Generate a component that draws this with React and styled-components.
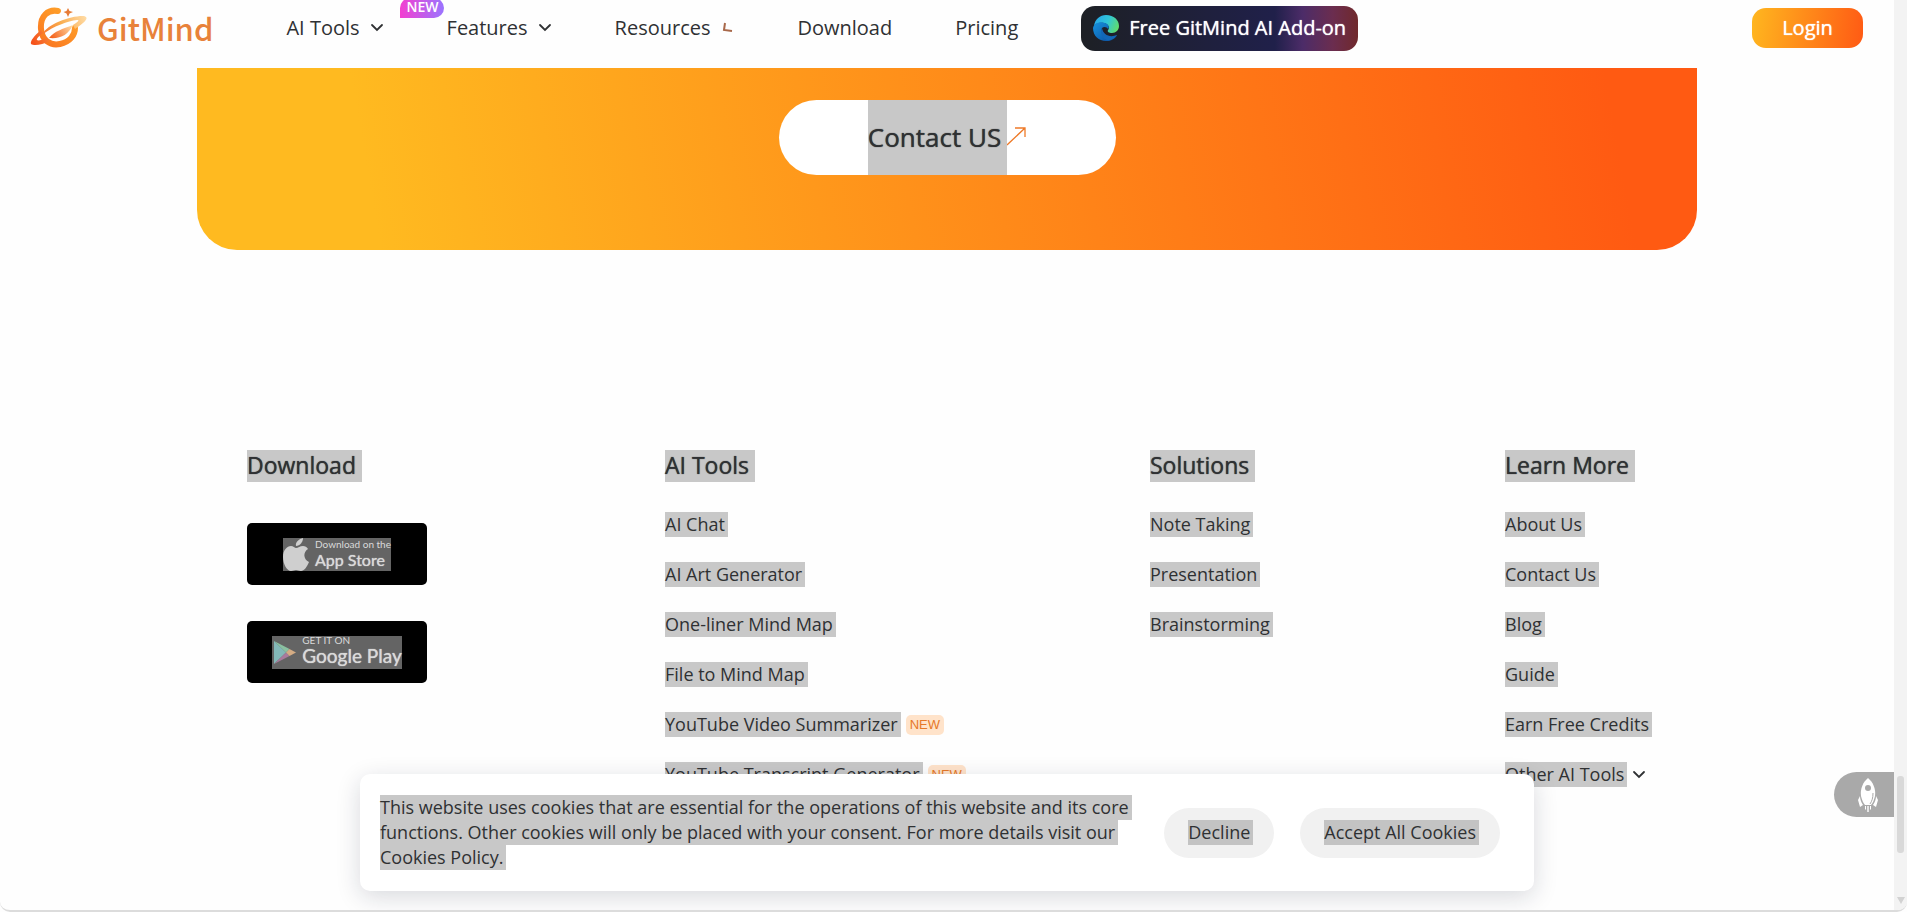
import React from 'react';
import styled, { createGlobalStyle } from 'styled-components';

const GlobalStyle = createGlobalStyle`
  * {
    box-sizing: border-box;
  }
  html {
    height: 100%;
    overflow: hidden;
  }
  body {
    margin: 0;
    height: 100%;
    overflow: hidden;
    background: #fefefe;
    color: #2f3133;
    font-family: 'Open Sans', 'Noto Sans', sans-serif;
  }
  #root {
    height: 100%;
  }
  a {
    color: inherit;
    text-decoration: none;
  }
  button {
    font-family: inherit;
    color: inherit;
    border: 0;
    padding: 0;
    cursor: pointer;
  }
`;

const Page = styled.div`
  display: flex;
  height: 100%;
  overflow: hidden;
  position: relative;
  border-bottom: 2px solid #dcdcdc;
  border-radius: 0 0 10px 10px;
`;

const Content = styled.div`
  flex: 1;
  min-width: 0;
  position: relative;
`;

const Header = styled.header`
  display: flex;
  align-items: center;
  height: 68px;
  padding: 0 31px 12px 30px;
`;

const Brand = styled.a`
  display: flex;
  align-items: center;
  gap: 9px;
  margin-right: 73px;
  color: #e8823a;
  font-family: 'Noto Sans CJK SC', 'Noto Sans', sans-serif;
  font-size: 31px;
  font-weight: 500;
  line-height: 38px;
`;

const Nav = styled.nav`
  display: flex;
  align-items: center;
  gap: 63px;
  flex: 1;
`;

const NavItem = styled.a`
  position: relative;
  display: flex;
  align-items: center;
  gap: 10px;
  font-size: 20px;
  line-height: 28px;
`;

const HotTag = styled.span`
  position: absolute;
  left: 114px;
  top: -16px;
  padding: 0 6px;
  height: 20px;
  border-radius: 10px 10px 10px 0;
  background: linear-gradient(90deg, #f33fd0, #9a74ff);
  color: #fff;
  font-size: 14px;
  font-weight: 600;
  line-height: 18px;
`;

const AddOn = styled.a`
  display: flex;
  align-items: center;
  gap: 10px;
  height: 45px;
  padding: 0 12px;
  border-radius: 14px;
  background: linear-gradient(90deg, #1d2025 0%, #20204a 70%, #4c2c68 80%, #6b2d4f 91%, #70292c 100%);
  color: #fff;
  font-size: 20px;
  line-height: 28px;
  text-shadow: 0 0 1px currentColor;
`;

const Login = styled.button`
  width: 111px;
  height: 40px;
  border-radius: 14px;
  background: linear-gradient(98deg, #ffb71f, #ff5a14);
  color: #fff;
  font-size: 20px;
  line-height: 28px;
  text-shadow: 0 0 1px currentColor;
`;

const Banner = styled.section`
  display: flex;
  justify-content: center;
  width: 1500px;
  max-width: 94%;
  height: 182px;
  margin: 0 auto;
  padding-top: 32px;
  border-radius: 0 0 40px 40px;
  background: linear-gradient(80deg, #ffba20 12%, #ff5a12 94%);
`;

const ContactLink = styled.a`
  display: flex;
  align-items: center;
  justify-content: center;
  width: 337px;
  height: 75px;
  overflow: hidden;
  border-radius: 38px;
  background: #fff;
  font-size: 26px;
  line-height: 75px;
  text-shadow: 0 0 1px currentColor;
`;

const Marked = styled.span`
  padding-right: ${(props) => (props.$wide ? '6px' : '3px')};
  padding-bottom: 1px;
  background: #c8c8c8;
  box-decoration-break: clone;
  -webkit-box-decoration-break: clone;
`;

const Footer = styled.footer`
  display: flex;
  width: 1500px;
  max-width: 94%;
  margin: 200px auto 0;
  padding-left: 50px;
`;

const Column = styled.div`
  flex: 0 0 ${(props) => props.$basis};
`;

const ColumnTitle = styled.h3`
  display: flex;
  margin: 0 0 30px;
  font-size: 23px;
  font-weight: 400;
  line-height: 31px;
  text-shadow: 0 0 1px currentColor;
`;

const LinkList = styled.ul`
  display: flex;
  flex-direction: column;
  gap: 25px;
  margin: 0;
  padding: 0;
  list-style: none;
`;

const LinkRow = styled.li`
  display: flex;
  align-items: center;
  gap: 5px;
  font-size: 18px;
  line-height: 25px;
`;

const NewTag = styled.span`
  padding: 0 4px;
  border-radius: 5px;
  background: #ffe3ca;
  color: #e67828;
  font-family: 'Liberation Sans', Arial, sans-serif;
  font-size: 13px;
  line-height: 20px;
`;

const StoreButtons = styled.div`
  display: flex;
  flex-direction: column;
  gap: 36px;
  margin-top: 41px;
`;

const StoreLink = styled.a`
  display: flex;
  align-items: center;
  justify-content: center;
  width: 180px;
  height: 62px;
  border-radius: 5px;
  background: #000;
`;

const StoreArt = styled.span`
  display: flex;
  align-items: center;
  gap: 6px;
  height: 33px;
  padding-left: ${(props) => props.$inset || 0};
  background: #646464;
  color: #dadada;
  font-family: Lato, sans-serif;
`;

const StoreText = styled.span`
  display: flex;
  flex-direction: column;
  padding-bottom: ${(props) => props.$lift || 0};
`;

const StoreSmall = styled.small`
  font-size: 10px;
  line-height: 12px;
  white-space: nowrap;
`;

const StoreName = styled.span`
  font-size: ${(props) => props.$size};
  line-height: 20px;
  white-space: nowrap;
  text-shadow: 0 0 1px currentColor;
`;

const CookieBar = styled.div`
  position: absolute;
  left: 360px;
  bottom: 19px;
  width: 1174px;
  max-width: 90%;
  display: flex;
  align-items: center;
  padding: 21px 34px 21px 20px;
  border-radius: 10px;
  background: #fff;
  box-shadow: 0 6px 24px rgba(20, 25, 50, 0.16);
`;

const CookieText = styled.p`
  flex: 1;
  margin: 0;
  padding-right: 20px;
  font-size: 18px;
  line-height: 25px;
`;

const CookieButtons = styled.div`
  display: flex;
  gap: 26px;
`;

const CookieButton = styled.button`
  height: 50px;
  padding: 0 21px 0 24px;
  border-radius: 25px;
  background: #f1f1f1;
  font-size: 18px;
  line-height: 25px;
  white-space: nowrap;
`;

const ButtonMark = styled.span`
  display: inline-block;
  padding-right: 3px;
  background: #c3c3c3;
`;

const TopButton = styled.button`
  position: absolute;
  right: 0;
  bottom: 93px;
  display: flex;
  align-items: center;
  justify-content: center;
  width: 60px;
  height: 45px;
  padding-left: 8px;
  border-radius: 23px 0 0 23px;
  background: #a9a9a9;
`;

const ScrollTrack = styled.div`
  display: flex;
  flex-direction: column;
  align-items: center;
  justify-content: flex-end;
  gap: 44px;
  width: 13px;
  padding-bottom: 6px;
  background: #f3f3f3;
`;

const ScrollThumb = styled.div`
  width: 7px;
  height: 77px;
  border-radius: 3px;
  background: #d9d9d9;
`;

const ScrollArrow = styled.div`
  border: 4px solid transparent;
  border-top: 7px solid #d2d2d2;
  border-bottom: 0;
`;

const Logo = () => (
  <svg width="58" height="42" viewBox="0 0 58 42" fill="none">
    <defs>
      <linearGradient id="ring" x1="40" y1="0" x2="10" y2="38" gradientUnits="userSpaceOnUse">
        <stop stopColor="#ffa62a" />
        <stop offset="1" stopColor="#fa7420" />
      </linearGradient>
      <linearGradient id="orbit" x1="57" y1="10" x2="3" y2="36" gradientUnits="userSpaceOnUse">
        <stop stopColor="#ffdda8" />
        <stop offset="0.45" stopColor="#f9ab4c" />
        <stop offset="1" stopColor="#f5511b" />
      </linearGradient>
      <linearGradient id="swoosh" x1="42" y1="19" x2="22" y2="31" gradientUnits="userSpaceOnUse">
        <stop stopColor="#ffd9a0" />
        <stop offset="1" stopColor="#f4641f" />
      </linearGradient>
    </defs>
    <path d="M28 4C18 2 10 9 11 22C12 33 20 39 30 37C40 35 45 28 45 21" stroke="url(#ring)" strokeWidth="6" strokeLinecap="round" />
    <path d="M11 23C4 29 0 34 1 37C4 39 12 38 20 34L17 31C12 33 8 34 7 33C6 32 9 29 13 26Z" fill="url(#orbit)" />
    <path d="M13 27C16 17 43 8 54 9C61 11 52 17 45 22L43 18C48 15 50 13 47 13C38 14 24 19 13 27Z" fill="url(#orbit)" />
    <path d="M19 31C25 24 32 22 43 18C38 28 31 32 19 31Z" fill="url(#swoosh)" />
    <path d="M38 1L39.500 4L43 5L39.500 6.500L38 10L36.500 6.500L33.500 5L36.500 4Z" fill="#e67b35" />
  </svg>
);

const Chevron = () => (
  <svg width="14" height="10" viewBox="0 0 14 10" fill="none" stroke="#2f3133" strokeWidth="1.800">
    <path d="M2 2L7 7L12 2" strokeLinecap="round" />
  </svg>
);

const TurningChevron = () => (
  <svg width="14" height="12" viewBox="0 0 14 12" fill="none" stroke="#a8684a" strokeWidth="2">
    <path d="M5 1L4 8L12 9" />
  </svg>
);

const EdgeIcon = () => (
  <svg width="26" height="26" viewBox="0 0 26 26">
    <defs>
      <linearGradient id="edgeTop" x1="2" y1="4" x2="25" y2="14" gradientUnits="userSpaceOnUse">
        <stop stopColor="#28a8e8" />
        <stop offset="0.5" stopColor="#30c6d8" />
        <stop offset="1" stopColor="#62dc68" />
      </linearGradient>
      <linearGradient id="edgeSide" x1="0" y1="8" x2="16" y2="26" gradientUnits="userSpaceOnUse">
        <stop stopColor="#1691dc" />
        <stop offset="1" stopColor="#0c56a8" />
      </linearGradient>
    </defs>
    <path d="M1 11C2 4 7 0 13 0C21 0 26 5 26 11C26 15 23 18 19 18C16 18 14 17 15 15C17 13 16 9 11 8C6 7 2 9 1 11Z" fill="url(#edgeTop)" />
    <path d="M0 13C1 8 7 6 12 8C15 9 17 12 15 14C14 12 11 11 9 13C7 18 11 23 18 23C20 23 22 22 24 20C22 24 18 26 13 26C6 26 0 21 0 13Z" fill="url(#edgeSide)" />
    <path d="M9 13C6 18 10 25 16 25.600C20 24 23 22 24 20C17 23 10 20 9 13Z" fill="#1267b8" />
  </svg>
);

const ArrowUpRight = () => (
  <svg width="19" height="22" viewBox="0 0 19 22" fill="none" stroke="#ee7a28" strokeWidth="1.300">
    <path d="M0 18L18 1M8 1H18V10" />
  </svg>
);

const Apple = () => (
  <svg width="26" height="33" viewBox="0 0 26 33" fill="#cfcfcf">
    <path d="M20 0C20 4 17 8 13 8C12 4 16 1 20 0Z" />
    <path d="M13 10C15 10 17 8 20 8C22 8 24 9 25 11C20 14 20 21 26 24C24 29 21 33 18 33C16 33 15 32 13 32C11 32 10 33 8 33C4 33 0 26 0 19C0 12 4 8 8 8C10 8 12 10 13 10Z" />
  </svg>
);

const PlayLogo = () => (
  <svg width="22" height="23" viewBox="0 0 22 23">
    <path d="M0 0V23L12 11.500Z" fill="#83b8b8" />
    <path d="M0 0L12 11.500L15.500 8Z" fill="#8ac0a0" />
    <path d="M0 23L12 11.500L15.500 15Z" fill="#a87a9c" />
    <path d="M15.500 8L22 11.500L15.500 15L12 11.500Z" fill="#d4ac84" />
  </svg>
);

const Rocket = () => (
  <svg width="20" height="34" viewBox="0 0 20 34" fill="#fff">
    <path d="M10 0C15 4 18 11 17 18C16 22 15 25 13 27H7C5 25 4 22 3 18C2 11 5 4 10 0Z" />
    <path d="M2 18L0 22L2 29L5 27C3 24 2 21 2 18ZM18 18L20 22L18 29L15 27C17 24 18 21 18 18Z" />
    <path d="M7 28H8V32L7 31ZM9.300 28H10.700V34H9.300ZM12 28H13V31L12 32Z" />
    <path d="M15 15C15 20 14 23 12 26" fill="none" stroke="#a9a9a9" />
    <circle cx="10" cy="10" r="3" fill="#a9a9a9" />
  </svg>
);

const columns = [
  {
    title: 'AI Tools',
    basis: '485px',
    links: [
      { label: 'AI Chat' },
      { label: 'AI Art Generator' },
      { label: 'One-liner Mind Map' },
      { label: 'File to Mind Map' },
      { label: 'YouTube Video Summarizer', isNew: true },
      { label: 'YouTube Transcript Generator', isNew: true },
    ],
  },
  {
    title: 'Solutions',
    basis: '355px',
    links: [{ label: 'Note Taking' }, { label: 'Presentation' }, { label: 'Brainstorming' }],
  },
  {
    title: 'Learn More',
    basis: '180px',
    links: [
      { label: 'About Us' },
      { label: 'Contact Us' },
      { label: 'Blog' },
      { label: 'Guide' },
      { label: 'Earn Free Credits' },
      { label: 'Other AI Tools', more: true },
    ],
  },
];

function App() {
  return (
    <>
      <GlobalStyle />
      <Page>
        <Content>
          <Header>
            <Brand href="#">
              <Logo />
              GitMind
            </Brand>
            <Nav>
              <NavItem href="#ai">
                AI Tools <Chevron />
                <HotTag>NEW</HotTag>
              </NavItem>
              <NavItem href="#features">
                Features <Chevron />
              </NavItem>
              <NavItem href="#resources">
                Resources <TurningChevron />
              </NavItem>
              <NavItem href="#download">Download</NavItem>
              <NavItem href="#pricing">Pricing</NavItem>
              <AddOn href="#addon">
                <EdgeIcon />
                Free GitMind AI Add-on
              </AddOn>
            </Nav>
            <Login type="button">Login</Login>
          </Header>

          <Banner>
            <ContactLink href="#contact">
              <Marked $wide>Contact US</Marked>
              <ArrowUpRight />
            </ContactLink>
          </Banner>

          <Footer>
            <Column $basis="418px">
              <ColumnTitle>
                <Marked $wide>Download</Marked>
              </ColumnTitle>
              <StoreButtons>
                <StoreLink href="#ios">
                  <StoreArt>
                    <Apple />
                    <StoreText>
                      <StoreSmall>Download on the</StoreSmall>
                      <StoreName $size="16px">App Store</StoreName>
                    </StoreText>
                  </StoreArt>
                </StoreLink>
                <StoreLink href="#android">
                  <StoreArt $inset="2px">
                    <PlayLogo />
                    <StoreText $lift="4px">
                      <StoreSmall>GET IT ON</StoreSmall>
                      <StoreName $size="19px">Google Play</StoreName>
                    </StoreText>
                  </StoreArt>
                </StoreLink>
              </StoreButtons>
            </Column>
            {columns.map((column) => (
              <Column key={column.title} $basis={column.basis}>
                <ColumnTitle>
                  <Marked $wide>{column.title}</Marked>
                </ColumnTitle>
                <LinkList>
                  {column.links.map((link) => (
                    <LinkRow key={link.label}>
                      <a href="#link">
                        <Marked>{link.label}</Marked>
                      </a>
                      {link.isNew && <NewTag>NEW</NewTag>}
                      {link.more && <Chevron />}
                    </LinkRow>
                  ))}
                </LinkList>
              </Column>
            ))}
          </Footer>

          <CookieBar>
            <CookieText>
              <Marked>
                This website uses cookies that are essential for the operations of this website and its core
                functions. Other cookies will only be placed with your consent. For more details visit our
                Cookies Policy.
              </Marked>
            </CookieText>
            <CookieButtons>
              <CookieButton type="button">
                <ButtonMark>Decline</ButtonMark>
              </CookieButton>
              <CookieButton type="button">
                <ButtonMark>Accept All Cookies</ButtonMark>
              </CookieButton>
            </CookieButtons>
          </CookieBar>

          <TopButton type="button" aria-label="Back to top">
            <Rocket />
          </TopButton>
        </Content>
        <ScrollTrack>
          <ScrollThumb />
          <ScrollArrow />
        </ScrollTrack>
      </Page>
    </>
  );
}

export default App;
